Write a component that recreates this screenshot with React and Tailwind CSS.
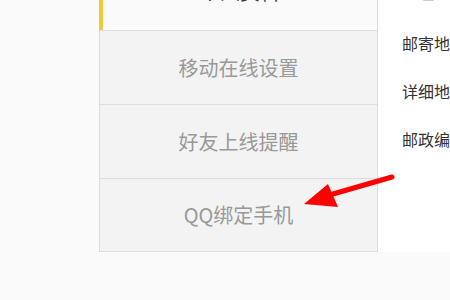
import React from "react";

const menuItems = ["移动在线设置", "好友上线提醒", "QQ绑定手机"];
const fields = ["邮寄地址", "详细地址", "邮政编码"];

const cjk = { fontFamily: '"Microsoft YaHei", "Noto Sans CJK SC", "Noto Sans", sans-serif' };

export default function App() {
  return (
    <div className="relative h-[300px] w-[450px] overflow-hidden bg-[#fafafa]" style={cjk}>
      <div className="-mt-[43px] flex pl-[99px]">
        {/* side menu */}
        <div className="w-[279px] shrink-0 border-r border-b border-[#dddddd]">
          <div className="flex h-[73px] items-center justify-center border-l-4 border-[#f0c83c] bg-[#fafafa] pb-[4px] text-[20px] text-[#333]">
            个人资料
          </div>
          {menuItems.map((item, i) => (
            <div
              key={item}
              className={
                i === menuItems.length - 1
                  ? "flex h-[73px] items-center justify-center border-t border-l border-[#dddddd] bg-[#f3f3f3] text-[20px] text-[#999]"
                  : "flex h-[74px] items-center justify-center border-t border-l border-[#dddddd] bg-[#f3f3f3] text-[20px] text-[#999]"
              }
            >
              {item}
            </div>
          ))}
        </div>

        {/* form labels */}
        <div className="flex-1 overflow-hidden whitespace-nowrap bg-white pt-[14px] pl-[24px] text-[16px] text-[#333]">
          <div className="flex h-[48px] items-center pb-[7px]">地址</div>
          {fields.map((f) => (
            <div key={f} className="flex h-[48px] items-center">
              {f}
            </div>
          ))}
        </div>
      </div>

      {/* red annotation arrow */}
      <svg className="pointer-events-none absolute left-0 top-0" width="450" height="300" viewBox="0 0 450 300">
        <line x1="392" y1="177" x2="326" y2="196" stroke="#f00" strokeWidth="5" strokeLinecap="round" />
        <polygon points="304,204 328,184 338,207" fill="#f00" />
      </svg>
    </div>
  );
}
